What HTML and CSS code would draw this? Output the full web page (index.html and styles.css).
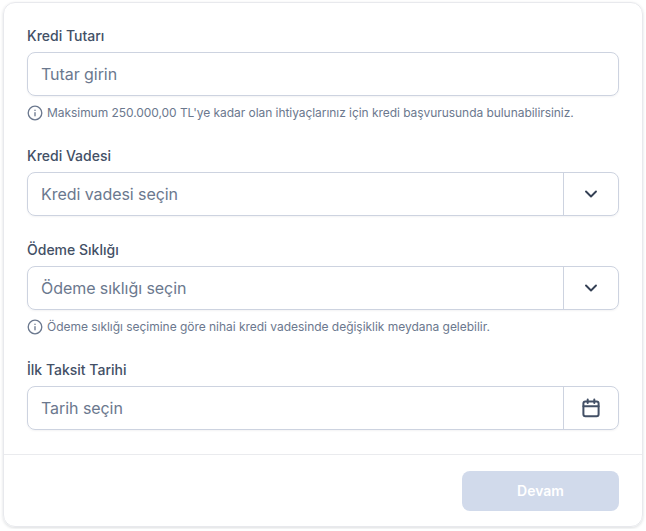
FILE: index.html
```html
<!DOCTYPE html>
<html lang="tr">
<head>
<meta charset="utf-8">
<title>Kredi Başvurusu</title>
<link rel="stylesheet" href="styles.css">
</head>
<body>
<form class="card">
  <div class="card-body">
    <div class="field">
      <label class="label">Kredi Tutarı</label>
      <div class="control"><span class="value">Tutar girin</span></div>
      <p class="hint"><svg class="info" viewBox="0 0 16 16"><circle cx="8" cy="8" r="6.8"/><path d="M8 7.6v3.2M8 5.2v.2"/></svg><span class="hint-text hint-amount">Maksimum 250.000,00 TL'ye kadar olan ihtiyaçlarınız için kredi başvurusunda bulunabilirsiniz.</span></p>
    </div>
    <div class="field">
      <label class="label">Kredi Vadesi</label>
      <div class="control"><span class="value">Kredi vadesi seçin</span><span class="addon"><svg class="icon" viewBox="0 0 20 20"><path d="M5 7.5l5 5 5-5"/></svg></span></div>
    </div>
    <div class="field">
      <label class="label">Ödeme Sıklığı</label>
      <div class="control"><span class="value">Ödeme sıklığı seçin</span><span class="addon"><svg class="icon" viewBox="0 0 20 20"><path d="M5 7.5l5 5 5-5"/></svg></span></div>
      <p class="hint"><svg class="info" viewBox="0 0 16 16"><circle cx="8" cy="8" r="6.8"/><path d="M8 7.6v3.2M8 5.2v.2"/></svg><span class="hint-text">Ödeme sıklığı seçimine göre nihai kredi vadesinde değişiklik meydana gelebilir.</span></p>
    </div>
    <div class="field">
      <label class="label">İlk Taksit Tarihi</label>
      <div class="control"><span class="value">Tarih seçin</span><span class="addon"><svg class="icon icon-calendar" viewBox="0 0 20 20"><rect x="2.4" y="3.4" width="15.2" height="14.8" rx="2"/><path d="M2.4 8.3h15.2M6.7 1.5V5M13.3 1.5V5"/></svg></span></div>
    </div>
  </div>
  <div class="card-footer"><button class="submit" type="button" disabled>Devam</button></div>
</form>
</body>
</html>
```
FILE: styles.css
```css
* { box-sizing: border-box; }
body { margin: 0; padding: 2px 3px; background: #fff; font-family: Inter, "Liberation Sans", sans-serif; }
.card { height: 525px; border: 1px solid #e8e9ed; border-radius: 12px; box-shadow: 0 1px 3px rgba(16, 24, 40, .15); display: flex; flex-direction: column; }
.card-body { padding: 23px; display: flex; flex-direction: column; gap: 24px; flex: 1; }
.label { display: block; font-size: 14px; line-height: 20px; font-weight: 500; color: #435066; margin-bottom: 6px; }
.control { display: flex; height: 44px; border: 1px solid #cdd3e0; border-radius: 8px; box-shadow: 0 1px 2px rgba(16, 24, 40, .05); }
.value { flex: 1; padding: 0 13px; font-size: 16px; line-height: 42px; letter-spacing: -.06px; color: #6b788e; }
.addon { width: 55px; border-left: 1px solid #cdd3e0; display: flex; align-items: center; justify-content: center; }
.icon { width: 20px; height: 20px; fill: none; stroke: #344054; stroke-width: 1.9; stroke-linecap: round; stroke-linejoin: round; }
.icon-calendar { stroke: #435066; stroke-width: 2; }
.hint { display: flex; align-items: center; gap: 4px; margin: 8px 0 0; height: 18px; font-size: 12px; line-height: 18px; color: #6b788e; white-space: nowrap; }
.hint-text { letter-spacing: -.03px; }
.hint-amount { letter-spacing: -.054px; }
.info { width: 16px; height: 16px; flex: none; fill: none; stroke: #6b788e; stroke-width: 1.33; stroke-linecap: round; }
.card-footer { height: 72px; border-top: 1px solid #eaebee; padding: 16px 23px; display: flex; justify-content: flex-end; }
.submit { width: 157px; height: 40px; border: 0; border-radius: 8px; background: #d1daeb; color: #fff; font: 600 14px/20px Inter, sans-serif; }
```
